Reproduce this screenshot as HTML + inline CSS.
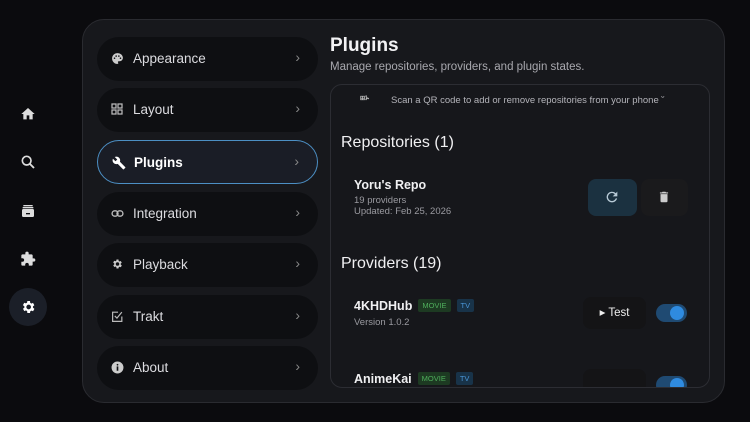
<!DOCTYPE html><html><head><style>
*{margin:0;padding:0;box-sizing:border-box}
body{width:750px;height:422px;background:#0b0b0e;font-family:"Liberation Sans",sans-serif;color:#e8e8ea;position:relative;overflow:hidden}
.abs{position:absolute}
.side svg{position:absolute}
.panel{left:82px;top:19px;width:643px;height:384px;background:#17181c;border:1px solid #2a2b30;border-radius:22px}
.item{position:absolute;left:97px;width:221px;height:44px;background:#0e0f12;border-radius:22px;font-size:13.5px;color:#dcdce0}
.item .lbl{position:absolute;left:36px;top:14px}
.item .chev{position:absolute;right:18px;top:12px;color:#888;font-size:14px}
.item svg{position:absolute;left:14px;top:15px}
.sel{background:#1a1d26;border:1.5px solid #4c8fc4}
.box{left:330px;top:84px;width:380px;height:304px;background:#16171b;border:1px solid #2c2d33;border-radius:12px;overflow:hidden}
.tag{display:inline-block;font-size:7.5px;padding:2px 4px;border-radius:2px;margin-left:6px;vertical-align:2px;font-weight:normal}
.mv{background:#1d3a22;color:#4fae5c}.tv{background:#183349;color:#4a95d6}
</style></head><body>
<div class="side">
<svg style="left:20px;top:106px" width="16" height="16" viewBox="0 0 24 24"><path fill="#ddd" d="M10 20v-6h4v6h5v-8h3L12 3 2 12h3v8z"/></svg>
<svg style="left:20px;top:154px" width="16" height="16" viewBox="0 0 24 24"><circle cx="10" cy="10" r="6.5" fill="none" stroke="#ddd" stroke-width="2.5"/><path d="M15 15l6 6" stroke="#ddd" stroke-width="2.8"/></svg>
<svg style="left:20px;top:203px" width="16" height="16" viewBox="0 0 24 24"><rect x="5" y="3" width="14" height="2" fill="#ddd"/><rect x="4" y="6" width="16" height="2" fill="#ddd"/><rect x="3" y="9" width="18" height="12" rx="2" fill="#ddd"/><rect x="9" y="15" width="6" height="2" fill="#0b0b0e"/></svg>
<svg style="left:20px;top:251px" width="16" height="16" viewBox="0 0 24 24"><path fill="#ddd" d="M20.5 11H19V7a2 2 0 0 0-2-2h-4V3.5a2.5 2.5 0 0 0-5 0V5H4a2 2 0 0 0-2 2v3.8h1.5a2.7 2.7 0 0 1 0 5.4H2V20a2 2 0 0 0 2 2h3.8v-1.5a2.7 2.7 0 0 1 5.4 0V22H17a2 2 0 0 0 2-2v-4h1.5a2.5 2.5 0 0 0 0-5z"/></svg>
<div class="abs" style="left:9px;top:288px;width:38px;height:38px;border-radius:50%;background:#1b1f28"></div>
<svg style="left:20px;top:299px" width="16" height="16" viewBox="0 0 24 24"><path fill="#fff" d="M19.4 13a7.5 7.5 0 0 0 0-2l2.1-1.6-2-3.5-2.5 1a7.3 7.3 0 0 0-1.700-1L15 3h-4l-.4 2.6a7.3 7.3 0 0 0-1.7 1l-2.5-1-2 3.5L6.6 11a7.5 7.5 0 0 0 0 2l-2.1 1.6 2 3.5 2.5-1a7.3 7.3 0 0 0 1.7 1L11 21h4l.4-2.6a7.3 7.3 0 0 0 1.7-1l2.5 1 2-3.5zM13 15.5a3.5 3.5 0 1 1 0-7 3.5 3.5 0 0 1 0 7z"/></svg>
</div>
<div class="abs panel"></div>
<div class="item" style="top:37px"><svg width="13" height="13" viewBox="0 0 24 24"><path fill="#ccc" d="M12 2a10 10 0 0 0 0 20c1 0 1.5-.7 1.5-1.5 0-.4-.2-.7-.4-1-.2-.3-.4-.6-.4-1 0-.8.7-1.5 1.5-1.5H16a6 6 0 0 0 6-6c0-5-4.5-9-10-9zM6.5 13a1.5 1.5 0 1 1 0-3 1.5 1.5 0 0 1 0 3zm3-4a1.5 1.5 0 1 1 0-3 1.5 1.5 0 0 1 0 3zm5 0a1.5 1.5 0 1 1 0-3 1.5 1.5 0 0 1 0 3zm3 4a1.5 1.5 0 1 1 0-3 1.5 1.5 0 0 1 0 3z"/></svg><span class="lbl">Appearance</span><span class="chev">›</span></div>
<div class="item" style="top:88px"><svg width="12" height="12" viewBox="0 0 24 24" fill="none" stroke="#bbb" stroke-width="2.5"><rect x="2" y="2" width="8" height="8"/><rect x="14" y="2" width="8" height="8"/><rect x="2" y="14" width="8" height="8"/><rect x="14" y="14" width="8" height="8"/></svg><span class="lbl">Layout</span><span class="chev">›</span></div>
<div class="item sel" style="top:140px"><svg width="14" height="14" viewBox="0 0 24 24"><path fill="#fff" d="M22.7 19l-9.1-9.1c.9-2.3.4-5-1.5-6.9-2-2-5-2.4-7.4-1.3L9 6 6 9 1.6 4.7C.4 7.1.9 10.1 2.9 12.1c1.9 1.9 4.6 2.4 6.9 1.5l9.1 9.1c.4.4 1 .4 1.4 0l2.3-2.3c.5-.4.5-1.1.1-1.4z"/></svg><span class="lbl" style="color:#fff;font-weight:bold">Plugins</span><span class="chev">›</span></div>
<div class="item" style="top:192px"><svg width="13" height="13" viewBox="0 0 24 24" fill="none" stroke="#bbb" stroke-width="2.5"><rect x="2" y="7" width="11" height="10" rx="5"/><rect x="11" y="7" width="11" height="10" rx="5"/></svg><span class="lbl">Integration</span><span class="chev">›</span></div>
<div class="item" style="top:243px"><svg width="12" height="12" viewBox="0 0 24 24"><path fill="#ccc" d="M19.4 13a7.5 7.5 0 0 0 0-2l2.1-1.6-2-3.5-2.5 1a7.3 7.3 0 0 0-1.7-1L15 3h-4l-.4 2.6a7.3 7.3 0 0 0-1.7 1l-2.5-1-2 3.5L6.6 11a7.5 7.5 0 0 0 0 2l-2.1 1.6 2 3.5 2.5-1a7.3 7.3 0 0 0 1.7 1L11 21h4l.4-2.6a7.3 7.3 0 0 0 1.7-1l2.5 1 2-3.5zM13 15.5a3.5 3.5 0 1 1 0-7 3.5 3.5 0 0 1 0 7z"/></svg><span class="lbl">Playback</span><span class="chev">›</span></div>
<div class="item" style="top:295px"><svg width="13" height="13" viewBox="0 0 24 24" fill="none" stroke="#bbb" stroke-width="2.2"><path d="M20 12v9H3V4h10"/><path d="M7 11l4 4 9-11"/></svg><span class="lbl">Trakt</span><span class="chev">›</span></div>
<div class="item" style="top:346px"><svg width="13" height="13" viewBox="0 0 24 24"><circle cx="12" cy="12" r="11" fill="#ccc"/><rect x="10.5" y="10" width="3" height="8" fill="#0e0f12"/><circle cx="12" cy="7" r="1.6" fill="#0e0f12"/></svg><span class="lbl">About</span><span class="chev">›</span></div>

<div class="abs" style="left:330px;top:35px;font-size:19px;font-weight:bold;color:#f2f2f4">Plugins</div>
<div class="abs" style="left:330px;top:61px;font-size:11.5px;color:#a8a8ae">Manage repositories, providers, and plugin states.</div>
<div class="abs box">
 <div class="abs" style="left:29px;top:8px;font-size:8px;color:#bbb;font-weight:bold">⊞ኑ</div>
 <div class="abs" style="left:60px;top:10px;font-size:9.5px;color:#b4b4ba">Scan a QR code to add or remove repositories from your phone ˘</div>
 <div class="abs" style="left:10px;top:49px;font-size:16px;color:#f0f0f2">Repositories (1)</div>
 <div class="abs" style="left:23px;top:93px;font-size:12.5px;color:#f0f0f2;font-weight:bold">Yoru's Repo</div>
 <div class="abs" style="left:23px;top:110px;font-size:9.5px;color:#9a9aa0;line-height:11px">19 providers<br>Updated: Feb 25, 2026</div>
 <div class="abs" style="left:257px;top:94px;width:49px;height:37px;border-radius:8px;background:#1b3140"></div>
 <svg class="abs" style="left:273px;top:104px" width="16" height="16" viewBox="0 0 24 24"><path fill="#b8cad6" d="M17.6 6.4A8 8 0 1 0 19.7 14h-2.1A6 6 0 1 1 12 6c1.7 0 3.1.7 4.2 1.8L13 11h7V4z"/></svg>
 <div class="abs" style="left:310px;top:94px;width:47px;height:37px;border-radius:8px;background:#1a1a1c"></div>
 <svg class="abs" style="left:326px;top:105px" width="14" height="14" viewBox="0 0 24 24"><path fill="#ccc" d="M6 19a2 2 0 0 0 2 2h8a2 2 0 0 0 2-2V7H6zM19 4h-3.5l-1-1h-5l-1 1H5v2h14z"/></svg>
 <div class="abs" style="left:10px;top:170px;font-size:16px;color:#f0f0f2">Providers (19)</div>
 <div class="abs" style="left:23px;top:214px;font-size:12.5px;color:#f0f0f2;font-weight:bold">4KHDHub<span class="tag mv">MOVIE</span><span class="tag tv">TV</span></div>
 <div class="abs" style="left:23px;top:232px;font-size:9.5px;color:#9a9aa0">Version 1.0.2</div>
 <div class="abs" style="left:252px;top:212px;width:63px;height:32px;border-radius:8px;background:#141416;font-size:11.5px;color:#eee;text-align:center;line-height:32px">▸ Test</div>
 <div class="abs" style="left:325px;top:219px;width:31px;height:18px;border-radius:9px;background:#1f4a72"></div>
 <div class="abs" style="left:339px;top:221px;width:14px;height:14px;border-radius:50%;background:#2f8be0"></div>
 <div class="abs" style="left:23px;top:287px;font-size:12.5px;color:#f0f0f2;font-weight:bold">AnimeKai<span class="tag mv">MOVIE</span><span class="tag tv">TV</span></div>
 <div class="abs" style="left:252px;top:284px;width:63px;height:32px;border-radius:8px;background:#141416"></div>
 <div class="abs" style="left:325px;top:291px;width:31px;height:18px;border-radius:9px;background:#1f4a72"></div>
 <div class="abs" style="left:339px;top:293px;width:14px;height:14px;border-radius:50%;background:#2f8be0"></div>
</div>
</body></html>
